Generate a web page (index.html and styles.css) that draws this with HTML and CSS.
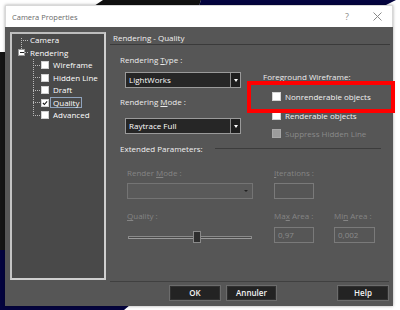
FILE: index.html
```html
<!DOCTYPE html>
<html>
<head>
<meta charset="utf-8">
<link rel="stylesheet" href="styles.css">
</head>
<body>
<div class="desk">
  <svg class="desk-bg" width="400" height="310" viewBox="0 0 400 310">
    <polygon points="103,0 201,0 199,6 94,6" fill="#111"/>
    <polygon points="201,0 396,0 384,6 199,6" fill="#04043f"/>
    <rect x="0" y="52" width="6" height="200" fill="#141414"/>
    <polygon points="0,250 6,250 6,305 130,305 124,310 0,310" fill="#04043f"/>
  </svg>

  <div class="win">
    <div class="titlebar">
      <span class="title">Camera Properties</span>
      <span class="tb-help">?</span>
      <svg class="tb-close" width="9" height="9" viewBox="0 0 9 9"><path d="M0.5 0.5 L8.5 8.5 M8.5 0.5 L0.5 8.5" stroke="#8a8a8a" stroke-width="1" fill="none"/></svg>
    </div>

    <div class="client">
      <div class="tree">
        <div class="roots">
          <div class="node">
            <span class="hl root-hl"></span><span class="tlabel">Camera</span>
          </div>
          <div class="node">
            <span class="expander"><span class="minus"></span></span><span class="hl exp-hl"></span><span class="tlabel">Rendering</span>
          </div>
        </div>
        <div class="children">
          <div class="node">
            <span class="hl child-hl"></span><span class="cb"></span><span class="tlabel">Wireframe</span>
          </div>
          <div class="node">
            <span class="hl child-hl"></span><span class="cb"></span><span class="tlabel">Hidden Line</span>
          </div>
          <div class="node">
            <span class="hl child-hl"></span><span class="cb"></span><span class="tlabel">Draft</span>
          </div>
          <div class="node">
            <span class="hl child-hl"></span><span class="cb"><svg width="8" height="8" viewBox="0 0 8 8"><path d="M1.2 4 L3.2 6 L6.8 1.8" stroke="#1a1a1a" stroke-width="1.5" fill="none"/></svg></span><span class="tlabel focus">Quality</span>
          </div>
          <div class="node">
            <span class="hl child-hl"></span><span class="cb"></span><span class="tlabel">Advanced</span>
          </div>
        </div>
      </div>

      <div class="page">
        <div class="page-head">Rendering - Quality</div>

        <div class="top">
          <div class="col-left">
            <div class="lbl lbl-type">Rendering <u>T</u>ype :</div>
            <div class="combo combo-type">
              <span class="combo-text">LightWorks</span>
              <span class="combo-btn"><span class="arrow"></span></span>
            </div>
            <div class="lbl lbl-mode">Rendering <u>M</u>ode :</div>
            <div class="combo combo-mode">
              <span class="combo-text">Raytrace Full</span>
              <span class="combo-btn"><span class="arrow"></span></span>
            </div>
          </div>
          <div class="col-right">
            <div class="lbl lbl-fg">Foreground Wireframe:</div>
            <div class="chkrow"><span class="cb2"></span><span>Nonrenderable objects</span></div>
            <div class="chkrow"><span class="cb2"></span><span>Renderable objects</span></div>
            <div class="chkrow disabled"><span class="cb2"></span><span>Suppress Hidden Line</span></div>
          </div>
        </div>

        <div class="group">
          <span class="group-lbl">Extended Parameters:</span>
          <span class="group-rule"></span>
        </div>

        <div class="ext">
          <div class="dlbl r1 c1">Render <u>M</u>ode :</div>
          <div class="dlbl r1 c3"><u>I</u>terations :</div>
          <div class="dcombo r2 c1"><span class="darrow"></span></div>
          <div class="dinput r2 c3"></div>
          <div class="dlbl r3 c1"><u>Q</u>uality :</div>
          <div class="dlbl r3 c3">Ma<u>x</u> Area :</div>
          <div class="dlbl r3 c5">Mi<u>n</u> Area :</div>
          <div class="slider r4 c1"><span class="track"></span><span class="thumb"></span></div>
          <div class="dinput r4 c3">0,97</div>
          <div class="dinput r4 c5">0,002</div>
        </div>

        <div class="footer">
          <button class="btn btn-ok">OK</button>
          <button class="btn btn-cancel">Annuler</button>
          <button class="btn btn-help">Help</button>
        </div>
      </div>
    </div>
  </div>

  <div class="highlight"></div>
</div>
</body>
</html>
```

FILE: styles.css
```css
* { box-sizing: border-box; }
html, body { margin: 0; padding: 0; }
body {
  width: 400px;
  height: 310px;
  overflow: hidden;
  background: #ffffff;
  font-family: "Open Sans", "Noto Sans", sans-serif;
  font-size: 8px;
  color: #ececec;
}
.desk {
  position: relative;
  width: 400px;
  height: 310px;
  padding: 5px 0 0 5px;
}
.desk-bg {
  position: absolute;
  left: 0;
  top: 0;
  z-index: 0;
}
.win {
  position: relative;
  z-index: 1;
  width: 388px;
  height: 301px;
  background: #565656;
  box-shadow: 0 0 3px rgba(0,0,0,0.35);
  display: flex;
  flex-direction: column;
}

/* title bar */
.titlebar {
  height: 22px;
  flex: none;
  background: #ffffff;
  display: flex;
  align-items: center;
  padding-left: 6px;
  border: 1px solid #d8d8d8;
  border-bottom: none;
}
.title {
  color: #6a6a6a;
  font-size: 7.5px;
  flex: 1;
}
.tb-help {
  color: #8a8a8a;
  font-size: 9px;
  margin-right: 24px;
}
.tb-close {
  margin-right: 10px;
}

/* client */
.client {
  flex: 1;
  display: flex;
  padding: 5px 0 0 5px;
}

/* tree */
.tree {
  width: 96px;
  height: 248px;
  flex: none;
  background: #494949;
  border: 2px solid #cfcfcf;
  border-top-color: #bdbdbd;
  border-left-color: #c4c4c4;
  padding-top: 0;
  color: #ffffff;
}
.node {
  height: 12.5px;
  display: flex;
  align-items: center;
  white-space: nowrap;
}
.roots {
  padding-left: 9px;
  background: repeating-linear-gradient(to bottom, #b8b8b8 0 1px, transparent 1px 2px) 9px 4px / 1px 12px no-repeat;
}
.hl {
  height: 1px;
  background: repeating-linear-gradient(to right, #b8b8b8 0 1px, transparent 1px 2px);
}
.root-hl { width: 7px; margin-right: 1px; }
.exp-hl { width: 3px; margin-right: 1px; }
.expander {
  width: 7px;
  height: 7px;
  margin-left: -3px;
  background: #ffffff;
  border: 1px solid #9a9a9a;
  display: flex;
  align-items: center;
  justify-content: center;
}
.minus {
  width: 4px;
  height: 1px;
  background: #222;
}
.children {
  margin-left: 21px;
  background: repeating-linear-gradient(to bottom, #b8b8b8 0 1px, transparent 1px 2px) 0 0 / 1px calc(100% - 6px) no-repeat;
}
.child-hl { width: 8px; }
.cb {
  width: 8px;
  height: 8px;
  background: #ffffff;
  border: 1px solid #d0d0d0;
  margin-right: 3px;
  display: flex;
  align-items: center;
  justify-content: center;
}
.cb svg { display: block; }
.tlabel { line-height: 10px; padding: 0 1px; }
.focus {
  border: 1px solid #8fa3bd;
  margin-left: -2px;
  padding: 0 2px;
  line-height: 9px;
}

/* page */
.page {
  width: 280px;
  margin-left: 4px;
  display: flex;
  flex-direction: column;
}
.page-head {
  height: 13px;
  line-height: 11px;
  padding-left: 3px;
  border-bottom: 1px solid #3a3a3a;
  color: #f0f0f0;
}

.top {
  height: 98px;
  display: flex;
  padding-left: 10px;
}
.col-left {
  width: 121px;
  display: flex;
  flex-direction: column;
}
.lbl {
  line-height: 11px;
  height: 11px;
  white-space: nowrap;
}
.lbl-type { margin-top: 9px; }
.combo {
  margin-left: 5px;
  height: 16px;
  background: #262626;
  border: 1px solid #9a9a9a;
  display: flex;
  align-items: stretch;
}
.combo-type { margin-top: 7px; }
.lbl-mode { margin-top: 8px; }
.combo-mode { margin-top: 11px; }
.combo-text {
  flex: 1;
  padding-left: 3px;
  line-height: 14px;
  color: #ffffff;
}
.combo-btn {
  width: 10px;
  border-left: 1px solid #8a8a8a;
  background: #1e1e1e;
  display: flex;
  align-items: center;
  justify-content: center;
}
.arrow {
  width: 0;
  height: 0;
  border-left: 2.5px solid transparent;
  border-right: 2.5px solid transparent;
  border-top: 3px solid #ffffff;
}

.col-right {
  margin-left: 22px;
  display: flex;
  flex-direction: column;
}
.lbl-fg { margin-top: 26px; }
.chkrow {
  height: 19.5px;
  display: flex;
  align-items: center;
  white-space: nowrap;
  color: #f2f2f2;
}
.lbl-fg + .chkrow { margin-top: 5px; }
.cb2 {
  width: 9px;
  height: 9px;
  margin-left: 9px;
  margin-right: 4px;
  background: #ffffff;
  border: 1px solid #d4d4d4;
}
.chkrow.disabled { color: #8a8a8a; }
.chkrow.disabled .cb2 {
  background: #9c9c9c;
  border-color: #a8a8a8;
}

/* group */
.group {
  height: 11px;
  display: flex;
  align-items: center;
  padding-left: 10px;
}
.group-lbl {
  width: 95px;
  line-height: 11px;
  white-space: nowrap;
  color: #f0f0f0;
}
.group-rule {
  width: 166px;
  height: 1px;
  background: #3c3c3c;
}

/* extended grid */
.ext {
  display: grid;
  padding-left: 17px;
  grid-template-columns: 126px 21px 40px 20px 41px;
  grid-template-rows: 13px 11px 5px 16px 11px 11px 6px 16px;
}
.r1 { grid-row: 2; }
.r2 { grid-row: 4; }
.r3 { grid-row: 6; }
.r4 { grid-row: 8; }
.c1 { grid-column: 1; }
.c3 { grid-column: 3; }
.c5 { grid-column: 5; }
.dlbl {
  line-height: 11px;
  color: #858585;
  white-space: nowrap;
}
.dcombo {
  border: 1px solid #747474;
  background: #5a5a5a;
  display: flex;
  align-items: center;
  justify-content: flex-end;
  padding-right: 4px;
}
.darrow {
  width: 0;
  height: 0;
  border-left: 2px solid transparent;
  border-right: 2px solid transparent;
  border-top: 2.5px solid #222;
}
.dinput {
  border: 1px solid #7a7a7a;
  color: #8c8c8c;
  line-height: 14px;
  padding-left: 3px;
}
.slider {
  position: relative;
  width: 124px;
  margin-left: 1px;
}
.track {
  position: absolute;
  left: 0;
  right: 0;
  top: 9px;
  height: 3px;
  border: 1px solid #8a8a8a;
  border-bottom-color: #9a9a9a;
  background: #4a4a4a;
}
.thumb {
  position: absolute;
  left: 65px;
  top: 4px;
  width: 8px;
  height: 12px;
  background: #2e2e2e;
  border: 1px solid #8a8a8a;
}

/* footer */
.footer {
  margin-top: 38px;
  width: 279px;
  border-top: 1px solid #404040;
  padding: 3px 0 0 59px;
  display: flex;
}
.btn {
  height: 16px;
  width: 52px;
  margin: 0;
  padding: 0;
  background: #232323;
  border: 1px solid #6c6c6c;
  box-shadow: inset 0 0 0 1px #303030;
  color: #f4f4f4;
  font-family: "Open Sans", "Noto Sans", sans-serif;
  font-size: 8px;
  font-weight: 600;
  line-height: 14px;
}
.btn-cancel { margin-left: 5px; width: 51px; }
.btn-help { margin-left: 60px; }

/* annotation */
.highlight {
  position: absolute;
  left: 247px;
  top: 81px;
  width: 148px;
  height: 32px;
  border: 4px solid #ff0000;
  z-index: 2;
}
```
